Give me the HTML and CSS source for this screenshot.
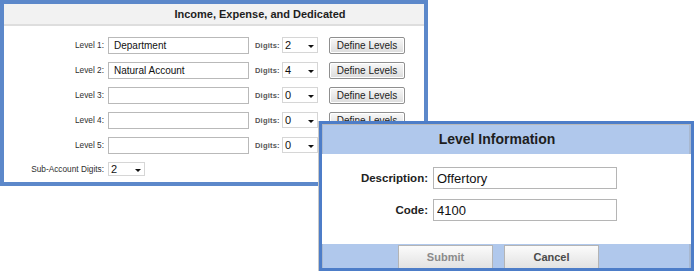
FILE: index.html
```html
<!DOCTYPE html>
<html>
<head>
<meta charset="utf-8">
<link rel="stylesheet" href="styles.css">
</head>
<body>
<div class="stage">
  <div class="panel">
    <div class="panel-head">Income, Expense, and Dedicated</div>
    <div class="panel-body">
      <div class="row">
        <label class="lvl">Level 1:</label>
        <input class="txt" type="text" value="Department" readonly>
        <span class="dig">Digits:</span>
        <div class="sel"><span>2</span><i class="arrow"></i></div>
        <button class="def">Define Levels</button>
      </div>
      <div class="row">
        <label class="lvl">Level 2:</label>
        <input class="txt" type="text" value="Natural Account" readonly>
        <span class="dig">Digits:</span>
        <div class="sel"><span>4</span><i class="arrow"></i></div>
        <button class="def">Define Levels</button>
      </div>
      <div class="row">
        <label class="lvl">Level 3:</label>
        <input class="txt" type="text" value="" readonly>
        <span class="dig">Digits:</span>
        <div class="sel"><span>0</span><i class="arrow"></i></div>
        <button class="def">Define Levels</button>
      </div>
      <div class="row">
        <label class="lvl">Level 4:</label>
        <input class="txt" type="text" value="" readonly>
        <span class="dig">Digits:</span>
        <div class="sel"><span>0</span><i class="arrow"></i></div>
        <button class="def">Define Levels</button>
      </div>
      <div class="row">
        <label class="lvl">Level 5:</label>
        <input class="txt" type="text" value="" readonly>
        <span class="dig">Digits:</span>
        <div class="sel"><span>0</span><i class="arrow"></i></div>
      </div>
      <div class="row row-sub">
        <label class="lvl">Sub-Account Digits:</label>
        <div class="sel sel-sub"><span>2</span><i class="arrow"></i></div>
      </div>
    </div>
  </div>

  <div class="dialog">
    <div class="dialog-head">Level Information</div>
    <div class="dialog-body">
      <div class="drow">
        <label class="dlabel">Description:</label>
        <input class="dtxt" type="text" value="Offertory" readonly>
      </div>
      <div class="drow">
        <label class="dlabel">Code:</label>
        <input class="dtxt" type="text" value="4100" readonly>
      </div>
    </div>
    <div class="dialog-foot">
      <button class="dbtn dbtn-off">Submit</button>
      <button class="dbtn">Cancel</button>
    </div>
  </div>
</div>
</body>
</html>
```
FILE: styles.css
```css
* { box-sizing: border-box; }
html, body { margin: 0; padding: 0; background: #fff; }
body { font-family: "Liberation Sans", Arial, sans-serif; color: #222; }

.stage { position: relative; width: 694px; height: 271px; overflow: hidden; }

/* ---------- main panel ---------- */
.panel {
  width: 428px;
  height: 186px;
  border: 4px solid #5c88ca;
  background: #fff;
}
.panel-head {
  height: 22px;
  background: #f2f2f2;
  border-bottom: 2px solid #dedede;
  font-weight: bold;
  font-size: 11px;
  line-height: 21px;
  text-align: center;
  padding-left: 92px;
  color: #1e1e1e;
}
.panel-body {
  padding-top: 11px;
  display: flex;
  flex-direction: column;
  gap: 9px;
}
.row { display: flex; align-items: center; height: 16px; }
.row-sub { height: 14px; }
.lvl {
  width: 100px;
  text-align: right;
  font-size: 8.3px;
  color: #2e2e2e;
  margin-right: 4px;
}
.txt {
  width: 141px;
  height: 17px;
  border: 1px solid #b9b9b9;
  padding: 0 0 0 5px;
  font-family: "Liberation Sans", Arial, sans-serif;
  font-size: 10px;
  color: #111;
  margin: 0 6px 0 0;
  outline: none;
}
.dig {
  width: 23px;
  font-size: 7.5px;
  font-weight: bold;
  color: #555;
  margin-right: 4px;
  letter-spacing: 0.2px;
}
.sel {
  width: 36px;
  height: 16px;
  border: 1px solid #d6d6d6;
  display: flex;
  align-items: center;
  justify-content: space-between;
  padding: 0 3px 0 2px;
  font-size: 11px;
  color: #111;
  margin-right: 11px;
}
.sel-sub { width: 37px; height: 14px; }
.arrow {
  width: 0; height: 0;
  border-left: 3px solid transparent;
  border-right: 3px solid transparent;
  border-top: 3px solid #111;
  margin-top: 2px;
}
.def {
  width: 76px;
  height: 17px;
  border: 1px solid #8f8f8f;
  border-radius: 2px;
  background: linear-gradient(#f8f8f8, #dcdcdc);
  font-family: "Liberation Sans", Arial, sans-serif;
  font-size: 10px;
  color: #222;
  padding: 0;
  box-shadow: inset 0 0 0 1px #fff;
}

/* ---------- dialog ---------- */
.dialog {
  position: absolute;
  left: 319px;
  top: 121px;
  width: 375px;
  height: 150px;
  border: 3px solid #4d7dc8;
  background: #fff;
  box-shadow: -1px 0 0 #c8c8c8;
  display: flex;
  flex-direction: column;
}
.dialog-head {
  height: 30px;
  background: #b0c8ec;
  border-top: 1px solid #b9b9b9;
  border-left: 1px solid #a8b8d0;
  border-right: 2px solid #a8b8d0;
  font-weight: bold;
  font-size: 14px;
  line-height: 28px;
  text-align: center;
  padding-right: 18px;
  color: #1e1e1e;
}
.dialog-body {
  height: 90px;
  padding-top: 13px;
  display: flex;
  flex-direction: column;
  gap: 10px;
}
.drow { display: flex; align-items: center; }
.dlabel {
  width: 106px;
  text-align: right;
  font-weight: bold;
  font-size: 11.5px;
  color: #222;
  margin-right: 5px;
}
.dtxt {
  width: 184px;
  height: 22px;
  border: 1px solid #b5b5b5;
  padding: 0 0 0 3px;
  font-family: "Liberation Sans", Arial, sans-serif;
  font-size: 13px;
  color: #111;
  outline: none;
  margin: 0;
}
.dialog-foot {
  flex: 1;
  background: #b0c8ec;
  border-left: 1px solid #a8b8d0;
  border-right: 2px solid #a8b8d0;
  display: flex;
  align-items: flex-end;
  gap: 11px;
  padding-left: 75px;
}
.dbtn {
  width: 95px;
  height: 23px;
  border: 1px solid #b4b4b4;
  border-bottom: none;
  background: linear-gradient(#fbfbfb, #e2e2e2);
  font-family: "Liberation Sans", Arial, sans-serif;
  font-weight: bold;
  font-size: 11px;
  color: #4a4a4a;
  padding: 0;
}
.dbtn-off { color: #8a8a8a; }
```
